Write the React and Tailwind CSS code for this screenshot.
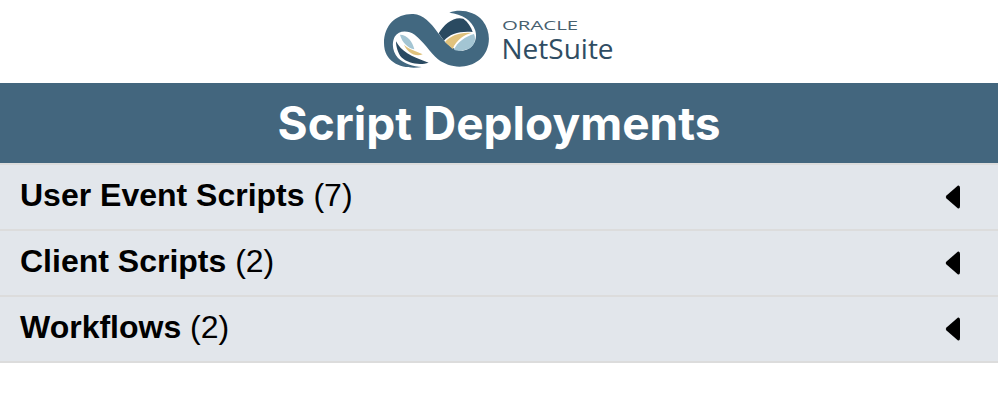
const SECTIONS = [
  { name: 'User Event Scripts', count: 7 },
  { name: 'Client Scripts', count: 2 },
  { name: 'Workflows', count: 2 },
]

function Logo() {
  return (
    <svg viewBox="0 0 336 186" className="w-[112px] h-[62px] shrink-0">
      <path
        fill="#426880"
        d="M12 105 C12 50 50 16 100 18 C130 20 152 44 172 72 C190 96 212 128 248 128 C278 124 294 96 286 68 C276 36 246 18 208 14 C240 2 284 10 308 38 C338 76 330 130 298 156 C258 186 208 180 174 154 C150 132 130 100 104 80 C84 66 56 66 44 86 C34 108 38 132 54 150 C72 168 100 175 126 177 C80 185 12 172 12 105 Z"
      />
      <path fill="#2a4a61" d="M176 76 C192 48 222 24 250 32 C264 42 274 58 278 72 C242 68 208 78 192 98 Z" />
      <path fill="#e0c27c" d="M195 102 C210 84 240 72 274 75 C254 80 230 94 218 123 Z" />
      <path fill="#a3c5d3" d="M222 125 C232 102 256 86 282 78 C290 96 282 116 262 124 C248 129 232 129 222 125 Z" />
      <path fill="#a3c5d3" d="M60 80 C82 80 98 102 103 124 C84 120 66 104 60 80 Z" />
      <path fill="#e0c27c" d="M72 110 C88 125 110 130 128 139 C104 148 82 132 72 110 Z" />
      <path fill="#2a4a61" d="M48 100 C62 128 92 146 146 164 C120 173 84 167 64 148 C54 136 48 116 48 100 Z" />
    </svg>
  )
}

function Row({ name, count }) {
  return (
    <div className="h-[66px] flex items-center justify-between pl-5 pr-[37px] bg-[#e2e6eb] border-b-2 border-[#dcdcdc] text-[32px] text-black font-['Liberation_Sans',sans-serif]">
      <div className="pb-[4px]">
        <span className="font-bold">{name}</span> ({count})
      </div>
      <svg viewBox="0 0 16 26" className="w-4 h-[26px]">
        <path d="M13 1.5 Q15 1 15 4 V22 Q15 25 13 24.5 L1.5 14.5 Q0 13 1.5 11.5 Z" fill="#000" />
      </svg>
    </div>
  )
}

export default function App() {
  return (
    <div className="w-[998px] h-[400px] bg-white overflow-hidden">
      <div className="h-[83px] flex items-start justify-center gap-[10px] pt-[8px] pr-[3px]">
        <Logo />
        <div className="flex flex-col w-[114px] pt-[12px] text-[#2f4d63] font-['Open_Sans',sans-serif]">
          <span className="h-[12px] text-[12px] leading-[12px] origin-left scale-x-[1.7] text-[#47606f]">ORACLE</span>
          <span className="text-[28px] leading-[33px]">NetSuite</span>
        </div>
      </div>
      <div className="h-[80px] flex items-center justify-center bg-[#43667e] text-white text-[46px] font-bold font-['Inter',sans-serif]">
        Script Deployments
      </div>
      <div className="border-t-2 border-[#dcdcdc]">
        {SECTIONS.map((s) => (
          <Row key={s.name} name={s.name} count={s.count} />
        ))}
      </div>
    </div>
  )
}
